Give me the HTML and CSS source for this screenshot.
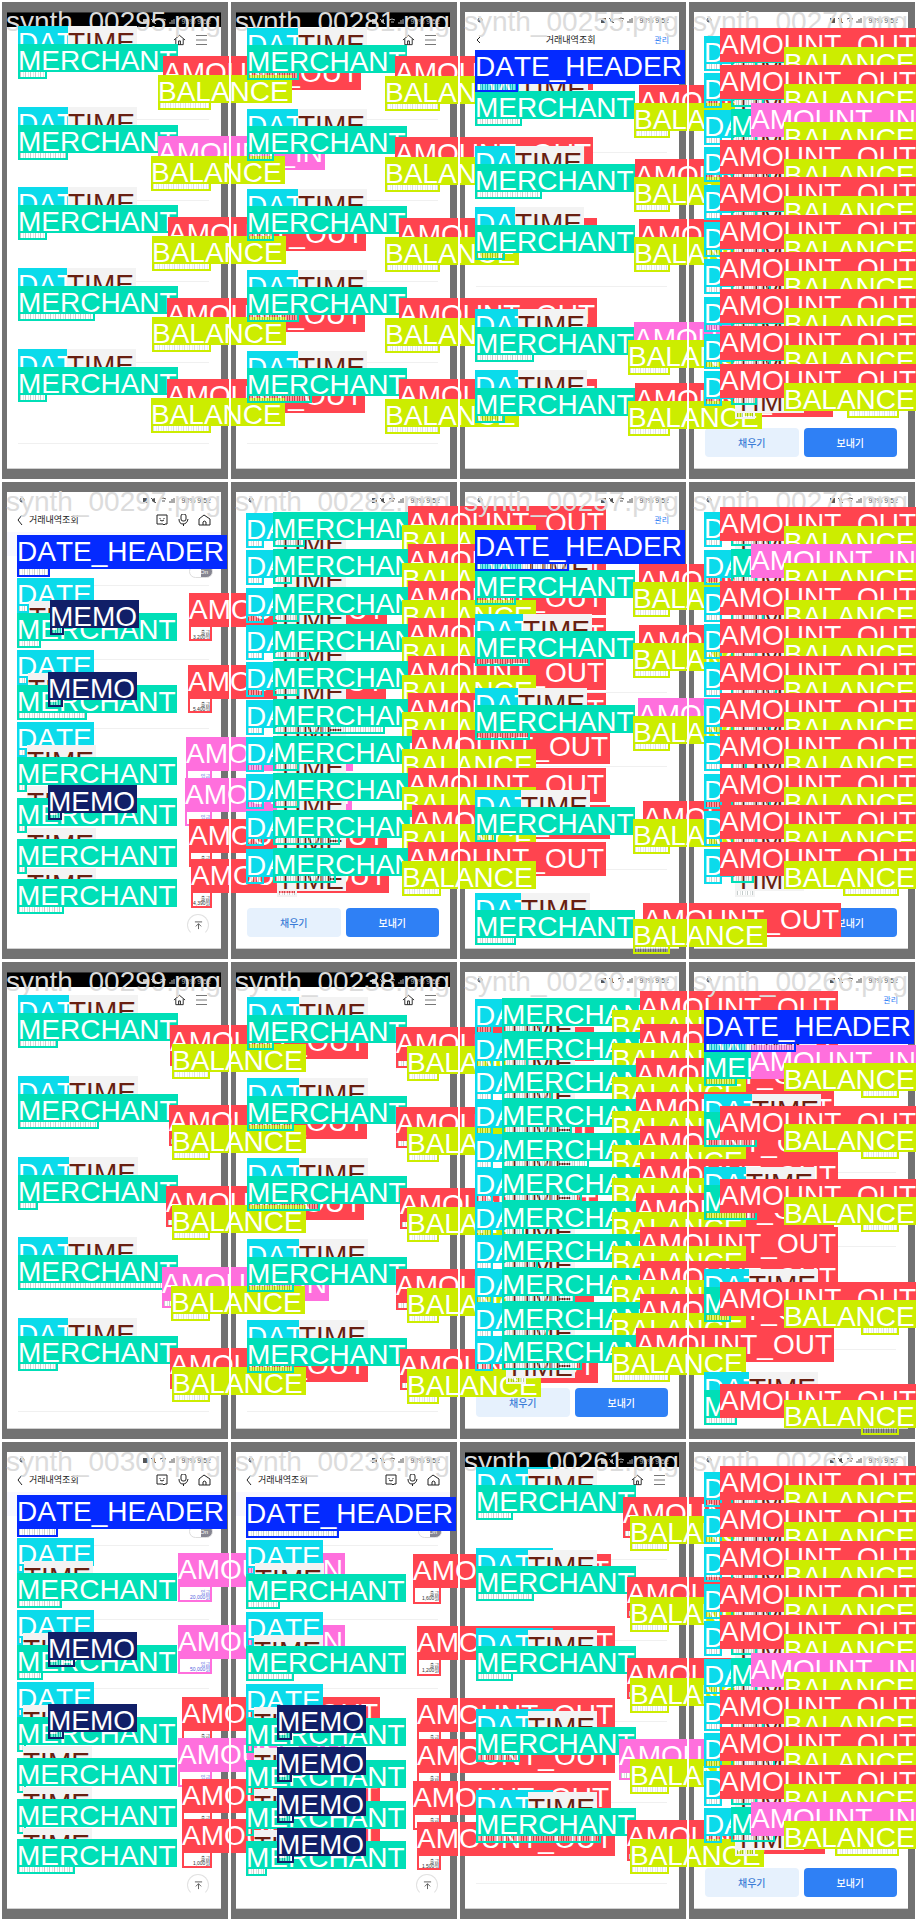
FILE: index.html
```html
<!DOCTYPE html>
<html lang="ko">
<head>
<meta charset="utf-8">
<title>Training batch</title>
<link rel="stylesheet" href="styles.css">
</head>
<body>
<main class="mosaic" id="mosaic"></main>

<template id="status">
  <div class="status">
    <svg class="status-left" viewBox="0 0 18 7"><circle cx="3" cy="3" r="2"/><path d="M2 5l2-4"/></svg>
    <svg class="status-icons" viewBox="0 0 34 7"><path class="solid" d="M0 1h5v5H0zM9 2l3-1v5l-3-2z"/><path d="M8 1l5 5M17 2q3-2 6 0M19 4h3M27 6V4M29 6V2M31 6V1"/></svg>
    <span class="clock">93% 9:52</span>
  </div>
</template>

<template id="dark">
  <header class="bar bar-end">
    <button class="icon-btn" aria-label="홈"><svg class="i-home" viewBox="0 0 14 12"><path d="M1 6l6-5 6 5M3 5v6h8V5M6 11V7h2v4"/></svg></button>
    <button class="icon-btn" aria-label="메뉴"><svg class="i-menu" viewBox="0 0 12 12"><path d="M0 1.500h11M0 6h11M0 10.500h11"/></svg></button>
  </header>
</template>

<template id="manage">
  <header class="bar">
    <button class="icon-btn" aria-label="뒤로"><svg class="i-back" viewBox="0 0 6 10"><path d="M5 2L2 5l3 3"/></svg></button>
    <h2 class="title title-mid">거래내역조회</h2>
    <button class="text-btn">관리</button>
  </header>
</template>

<template id="wallet">
  <header class="bar"></header>
</template>

<template id="bank">
  <header class="bar bar-bank">
    <button class="icon-btn" aria-label="뒤로"><svg class="i-back" viewBox="0 0 6 10"><path d="M5 0L1 5l4 5"/></svg></button>
    <h2 class="title">거래내역조회</h2>
    <button class="icon-btn" aria-label="챗봇"><svg class="i-home" viewBox="0 0 13 12"><path d="M1 1h10v9H9l-1 1-1-1H1zM4 4v1M8 4v1M4 6q2 2 4 0"/></svg></button>
    <button class="icon-btn" aria-label="음성"><svg class="i-home" viewBox="0 0 13 12"><rect x="4" y="0" width="5" height="7" rx="2"/><path d="M2 5q0 5 4 5t5-5M6.500 10v2"/></svg></button>
    <button class="icon-btn" aria-label="홈"><svg class="i-home" viewBox="0 0 13 12"><path d="M1 5l5-4 6 4v6H1zM5 11V8q1-2 3 0v3"/></svg></button>
  </header>
  <div class="band"></div>
  <div class="switch-row"><span class="switch">On</span></div>
</template>

<template id="actions">
  <footer class="actions">
    <button class="btn btn-soft">채우기</button>
    <button class="btn btn-main">보내기</button>
  </footer>
</template>

<template id="top">
  <button class="to-top" aria-label="맨 위로"><svg viewBox="0 0 10 10"><path d="M1 1h8M5 9V3M2 6l3-3 3 3"/></svg></button>
</template>
<script src="app.js"></script>
</body>
</html>
```
FILE: styles.css
```css
* { box-sizing: border-box; }
body { margin: 0; background: #fff; font-family: "Liberation Sans", "Noto Sans CJK KR", sans-serif; }
button { border: 0; padding: 0; background: none; font: inherit; color: inherit; }

.mosaic { position: relative; display: grid; grid-template-columns: repeat(4, 1fr); grid-template-rows: repeat(4, auto); grid-auto-flow: column; overflow: hidden; }
.tile { position: relative; min-width: 0; height: 480px; padding: 12px 8px 11px 7px; background: #727272; }

/* phone screen */
.screen { display: flex; flex-direction: column; height: 100%; background: #fff; border-bottom: 1px solid #d0d0d0; overflow: hidden; }
.status { display: flex; align-items: center; flex: none; gap: 4px; height: 15px; padding: 2px 10px 0 12px; color: #555; font-size: 7px; }
.status svg { height: 7px; fill: none; stroke: currentColor; stroke-width: 1; }
.status .solid { fill: currentColor; stroke: none; }
.status-left { width: 18px; margin-right: auto; }
.status-icons { width: 34px; }
.screen-dark .status { background: #000; color: #bbb; border-top: 1px solid #333; }
.screen-dark .status-left { visibility: hidden; }
.bar { display: flex; align-items: center; flex: none; height: 25px; padding: 0 10px; color: #222; }
.bar-end { justify-content: flex-end; gap: 10px; padding-right: 13px; }
.bar-bank { gap: 8px; }
.icon-btn { display: flex; flex: none; }
.icon-btn svg { fill: none; stroke: currentColor; stroke-width: 1; }
.i-home { width: 13px; height: 12px; }
.icon-btn .i-menu { width: 12px; height: 12px; color: #777; }
.i-back { width: 6px; height: 10px; }
.title { margin: 0; font-family: "Noto Sans CJK KR", sans-serif; font-size: 9px; font-weight: 400; line-height: 12px; }
.bar-bank .title { margin-right: auto; margin-left: -2px; }
.title-mid { flex: 1; text-align: center; padding-left: 6px; }
.text-btn { color: #2f80f5; font-family: "Noto Sans CJK KR", sans-serif; font-size: 8px; line-height: 12px; }
.band { flex: none; height: 24px; background: #f8f8ff; }
.switch-row { display: flex; justify-content: flex-end; flex: none; height: 29px; padding: 9px 8px 0; }
.switch { width: 24px; height: 13px; padding-right: 4px; border: 1px solid #ddd; border-radius: 7px; background: linear-gradient(90deg, #fff 50%, #858591 50%); color: #fff; font-size: 6px; line-height: 12px; text-align: right; }
.ledger { flex: 1; margin: 0; padding: 0 12px 0 11px; list-style: none; }
.ledger li { border-bottom: 1px solid #f0f0f0; }
.actions { display: flex; flex: none; gap: 5px; padding: 0 11px 11px; }
.btn { flex: 1; height: 29px; border-radius: 4px; font-family: "Noto Sans CJK KR", sans-serif; font-size: 10px; font-weight: 500; }
.btn-soft { background: #e6f1fd; color: #3b7cd6; }
.btn-main { background: #2f80f5; color: #fff; }
.to-top { display: flex; align-items: center; justify-content: center; flex: none; align-self: flex-end; width: 22px; height: 22px; margin: 0 12px 12px 0; border: 1px solid #e2e2e2; border-bottom-color: #fff; border-radius: 50%; }
.to-top svg { width: 9px; height: 9px; fill: none; stroke: #555; stroke-width: 1; }

/* annotation layer: runs past its tile, above every screen */
.marks { position: absolute; z-index: 1; inset: 0 -1px -1px 0; border: 2px solid #fff; font-size: 28px; line-height: 34px; font-kerning: none; white-space: nowrap; }
.marks span { position: absolute; }
.marks .name { left: 4px; top: 3px; color: #dcdcdc; }
.label { height: 28px; color: #fff; }
.box { border: 2px solid; }
.box::before { content: ""; display: block; height: 100%; background: repeating-linear-gradient(90deg, #25403e44 0 1px, #ffffff70 1px 3px, #25403e22 3px 4px, #ffffff70 4px 5px); }
.box-BALANCE::before { opacity: .6; }
.box-note { overflow: hidden; padding: 3px 0 0; background: #fff; font-size: 5px; line-height: 5px; text-align: right; white-space: normal; word-break: keep-all; }
.box-note::before { display: none; }
.box-note b { color: #333; font-weight: 400; }
.box-note.box-AMOUNT_IN b { color: #5560e0; }

.label-DATE { width: 77px; background: #0bdbeb; }
.label-TIME { width: 69px; background: #f3f3f3; color: #681f11; }
.label-MERCHANT { width: 160px; background: #00dfb7; }
.label-MEMO { width: 89px; background: #111f68; }
.label-BALANCE { width: 134px; background: #cced00; }
.label-AMOUNT_IN { width: 167px; height: 34px; background: #ff6fdd; }
.label-AMOUNT_OUT { width: 198px; height: 34px; background: #ff444f; }
.label-DATE_HEADER { width: 210px; height: 34px; background: #042aff; }
.box-DATE { border-color: #0bdbeb; }
.box-TIME { border-color: #f3f3f3; }
.box-MERCHANT { border-color: #00dfb7; }
.box-MEMO { border-color: #111f68; }
.box-BALANCE { border-color: #cced00; }
.box-AMOUNT_IN { border-color: #ff6fdd; }
.box-AMOUNT_OUT { border-color: #ff444f; }
.box-DATE_HEADER { border-color: #042aff; }
```
FILE: app.js
```js
const NAMES = { D: 'DATE', T: 'TIME', M: 'MERCHANT', N: 'MEMO', B: 'BALANCE', I: 'AMOUNT_IN', O: 'AMOUNT_OUT', H: 'DATE_HEADER' };

// Each mark: [kind, labelX, labelY, boxRight, boxBottom, boxLeft, note]
// Rows with one transaction per block:
// [merchantY, timeX, merchantBoxRight, amountKind, amountX, amountY, balanceX, balanceY]
function stack(rows, o) {
  const out = [];
  rows.forEach(([y, tx, mb, kind, ax, ay, bx, by]) => {
    out.push(['D', o.x, y - o.d, o.dateBox, y, o.x]);
    out.push(['T', tx, y - (o.t || o.d)]);
    out.push(['M', o.x, y, mb, y + 33]);
    out.push([kind, ax, ay, o.tall ? o.right : 0, ay + 39]);
    out.push(['B', bx, by, o.right, by + 33, o.balLeft]);
  });
  return out;
}

// Compact rows: [dateY, amountY, merchantBoxRight, amountKind, amountX]
function dense(rows, o) {
  const out = [];
  rows.forEach(([d, a, mb, kind, ax]) => {
    const k = kind || 'O';
    out.push(['D', 17, d, 35, d + 33]);
    out.push(['T', 48, d + 14, 68, d + 46]);
    out.push(['M', 44, d - 1, mb, d + 32]);
    out.push([k, ax || (k === 'I' ? 64 : o.ax), a]);
    out.push(['B', o.bx, a + 19, 212, a + 52, o.balLeft]);
  });
  return out;
}

// Bank rows: [dateY or 0, timeX, timeY, merchantY, merchantBoxRight, kind, amountX, amountY, amountBoxBottom, note, memoX, memoBoxRight]
function bank(rows, right) {
  const out = [];
  rows.forEach(([d, tx, ty, my, mb, kind, ax, ay, ab, note, nx, nb]) => {
    if (d) out.push(['D', 17, d, tx, d + 33]);
    out.push(['T', tx, ty]);
    out.push(['M', 17, my, mb, my + 33]);
    out.push([kind, ax, ay, right, ab, ax, note]);
    if (nx) out.push(['N', nx, my - 13, nb, my + 20]);
  });
  return out;
}

const tiles = [
  { name: '00295', type: 'dark', lines: [68, 81, 81, 81, 81], marks: stack([
    [44, 68, 47, 'O', 163, 56, 158, 75], [125, 68, 68, 'I', 158, 136, 151, 156], [205, 68, 47, 'O', 168, 217, 152, 236],
    [286, 67, 95, 'O', 167, 298, 152, 317], [367, 67, 47, 'O', 167, 379, 151, 398]], { x: 18, d: 18, right: 211 }) },
  { name: '00297', type: 'bank', lines: [1, 74, 69], top: 1, marks: bank([
    [98, 29, 121, 133, 41, 'O', 189, 113, 159, '출금 3,200원', 50, 64],
    [170, 28, 193, 205, 87, 'O', 188, 185, 231, '출금 5,400원', 48, 63],
    [242, 27, 265, 277, 27, 'I', 186, 257, 303, '입금'],
    [0, 27, 306, 318, 27, 'I', 185, 298, 344, '입금', 48, 62],
    [0, 27, 348, 359, 27, 'O', 189, 339, 385, '출금'],
    [0, 27, 388, 399, 64, 'O', 191, 379, 426, '출금 4,390원']], 212).concat([['H', 17, 55, 50, 95]]) },
  { name: '00299', type: 'dark', lines: [400], marks: stack([
    [53, 69, 58, 'O', 170, 65, 172, 84], [134, 69, 99, 'O', 169, 145, 172, 165], [215, 69, 38, 'O', 166, 226, 172, 245],
    [295, 68, 178, 'I', 162, 307, 171, 326], [376, 68, 58, 'O', 170, 388, 172, 407]], { x: 18, d: 18, right: 210, tall: 1 }) },
  { name: '00300', type: 'bank', lines: [1, 74, 69], top: 1, marks: bank([
    [98, 24, 121, 133, 62, 'I', 178, 113, 160, '입금 20,000원'],
    [170, 23, 193, 205, 43, 'I', 178, 185, 232, '입금 50,000원', 48, 75],
    [242, 23, 265, 277, 26, 'O', 182, 257, 303, '출금 2,200원', 48, 64],
    [0, 23, 306, 318, 26, 'I', 178, 298, 345, '입금'],
    [0, 23, 347, 359, 26, 'O', 182, 339, 385, '출금'],
    [0, 23, 388, 399, 75, 'O', 182, 379, 426, '출금 1,000원']], 212).concat([['H', 17, 55, 58, 95]]) },

  { name: '00281', type: 'dark', lines: [68, 81, 81, 81, 81], marks: stack([
    [45, 69, 70, 'O', 166, 56, 156, 76], [126, 69, 45, 'O', 166, 137, 156, 157], [206, 69, 45, 'O', 170, 218, 156, 237],
    [287, 69, 70, 'O', 170, 298, 156, 318], [368, 69, 83, 'O', 170, 379, 156, 399]], { x: 18, d: 17, right: 211 }) },
  { name: '00282', type: 'wallet', lines: [], actions: 1, marks: dense([
    [33, 26, 76], [70, 64, 63], [108, 101, 70], [145, 138, 80], [182, 176, 70], [220, 213, 156], [257, 250, 70, 'O', 183],
    [294, 288, 70], [331, 325, 111, 'O', 183], [369, 362, 107]], { ax: 179, bx: 173 }) },
  { name: '00238', type: 'dark', lines: [400], marks: stack([
    [55, 70, 45, 'O', 167, 67, 178, 86], [136, 70, 65, 'O', 167, 147, 178, 167], [216, 70, 91, 'O', 171, 228, 178, 247],
    [297, 70, 65, 'O', 167, 309, 178, 328], [378, 70, 65, 'O', 171, 389, 178, 409]], { x: 18, d: 18, right: 210, tall: 1 }) },
  { name: '00236', type: 'bank', lines: [1, 74, 69], top: 1, marks: bank([
    [100, 26, 123, 134, 51, 'O', 184, 114, 162, '출금 1,600원'],
    [172, 25, 195, 206, 65, 'O', 188, 186, 234, '출금 1,200원'],
    [244, 25, 267, 278, 25, 'O', 188, 258, 306, '출금', 48, 63],
    [0, 25, 308, 320, 25, 'O', 188, 299, 348, '출금', 48, 63],
    [0, 25, 349, 361, 25, 'O', 184, 341, 388, '출금', 48, 65],
    [0, 25, 390, 401, 38, 'O', 188, 382, 428, '출금 1,500원', 48, 65]], 212).concat([['H', 17, 57, 110, 96]]) },

  { name: '00255', type: 'manage', lines: [101, 134], marks: stack([
    [91, 61, 64, 'O', 181, 85, 176, 103], [164, 57, 84, 'O', 177, 159, 176, 177], [225, 57, 47, 'O', 181, 219, 176, 237],
    [327, 60, 76, 'I', 176, 322, 170, 340], [388, 60, 47, 'O', 177, 383, 170, 401]], { x: 17, d: 18, right: 212 }).concat([['H', 17, 50, 60, 90]]) },
  { name: '00257', type: 'manage', lines: [161, 74, 103], marks: stack([
    [90, 65, 58, 'O', 181, 84, 175, 102], [151, 65, 72, 'O', 181, 145, 175, 163], [225, 60, 72, 'I', 180, 218, 175, 236],
    [327, 63, 38, 'O', 185, 321, 175, 339], [430, 63, 58, 'O', 185, 423, 175, 439]], { x: 17, d: 17, right: 212 }).concat([['H', 17, 50, 111, 89]]) },
  { name: '00260', type: 'wallet', lines: [], actions: 1, marks: dense([
    [39, 31, 84], [73, 64, 70], [106, 98, 95], [140, 132, 114], [174, 166, 131], [208, 199, 124], [242, 233, 66],
    [275, 267, 80], [309, 301, 117], [343, 334, 90], [376, 368, 124]].map((r, i) => r.concat('O', [2, 3, 6, 10].includes(i) ? 178 : 182)), { ax: 182, bx: 154 }) },
  { name: '00261', type: 'dark', lines: [68, 81, 81, 81, 81], marks: stack([
    [45, 70, 55, 'O', 165, 57, 172, 76], [126, 70, 76, 'O', 169, 137, 172, 157], [206, 70, 55, 'O', 169, 218, 172, 238],
    [287, 70, 62, 'I', 161, 299, 172, 319], [368, 70, 143, 'O', 169, 380, 172, 399]], { x: 18, d: 18, t: 16, right: 211, tall: 1 }) },

  { name: '00270', type: 'wallet', lines: [], actions: 1, marks: dense([
    [36, 28, 70], [73, 65, 77], [110, 103, 70, 'I'], [147, 140, 84], [185, 177, 70], [222, 215, 77], [259, 252, 84],
    [297, 289, 70], [334, 326, 84], [371, 364, 70]], { ax: 33, bx: 97, balLeft: 160 }) },
  { name: '00276', type: 'wallet', lines: [], actions: 1, marks: dense([
    [32, 27, 84], [70, 64, 70, 'I'], [107, 101, 77], [144, 139, 70], [182, 176, 90], [219, 213, 84], [256, 250, 60],
    [294, 288, 84], [331, 325, 70], [369, 362, 67]], { ax: 33, bx: 97, balLeft: 156 }) },
  { name: '00266', type: 'manage', lines: [161, 74, 103], marks: stack([
    [91, 59, 50, 'I', 64, 85, 97, 103], [152, 65, 70, 'O', 33, 146, 97, 164], [225, 59, 70, 'O', 33, 219, 97, 237],
    [327, 62, 44, 'O', 33, 322, 97, 340], [430, 62, 50, 'O', 33, 424, 97, 440]], { x: 17, d: 18, right: 212, balLeft: 174 }).concat([['H', 17, 50, 109, 90]]) },
  { name: '00262', type: 'wallet', lines: [], actions: 1, marks: dense([
    [32, 26, 70], [69, 63, 84], [107, 101, 70], [144, 138, 84], [181, 175, 70], [219, 213, 70, 'I'], [256, 250, 77],
    [293, 287, 88], [331, 325, 70], [368, 362, 88, 'I']], { ax: 33, bx: 97, balLeft: 148 }) }
];

const px = (el, s) => { for (const k in s) el.style[k] = s[k] + 'px'; return el; };
const part = id => document.getElementById(id).content.cloneNode(true);
function make(tag, cls, text) {
  const el = document.createElement(tag);
  el.className = cls;
  if (text) el.textContent = text;
  return el;
}

for (const t of tiles) {
  const tile = make('section', 'tile');
  const screen = make('div', 'screen screen-' + t.type);
  screen.append(part('status'), part(t.type));
  const list = make('ul', 'ledger');
  t.lines.forEach(h => list.append(px(make('li', ''), { height: h })));
  screen.append(list);
  if (t.actions) screen.append(part('actions'));
  if (t.top) screen.append(part('top'));

  const layer = make('div', 'marks');
  layer.append(make('span', 'name', 'synth_' + t.name + '.png'));
  for (const [k, x, y, right, bottom, boxLeft, note] of t.marks) {
    const name = NAMES[k];
    const left = boxLeft || x;
    const h = 'IOH'.includes(k) ? 34 : 28;
    if (right > left) {
      const box = px(make('span', 'box box-' + name), { left: left - 2, top: y + h - 4, width: right - left, height: bottom - y - h + 4 });
      if (note) { box.classList.add('box-note'); box.append(make('b', '', note)); }
      layer.append(box);
    }
    layer.append(px(make('span', 'label label-' + name, name), { left: x - 2, top: y - 2 }));
  }
  tile.append(screen, layer);
  document.getElementById('mosaic').append(tile);
}
```
